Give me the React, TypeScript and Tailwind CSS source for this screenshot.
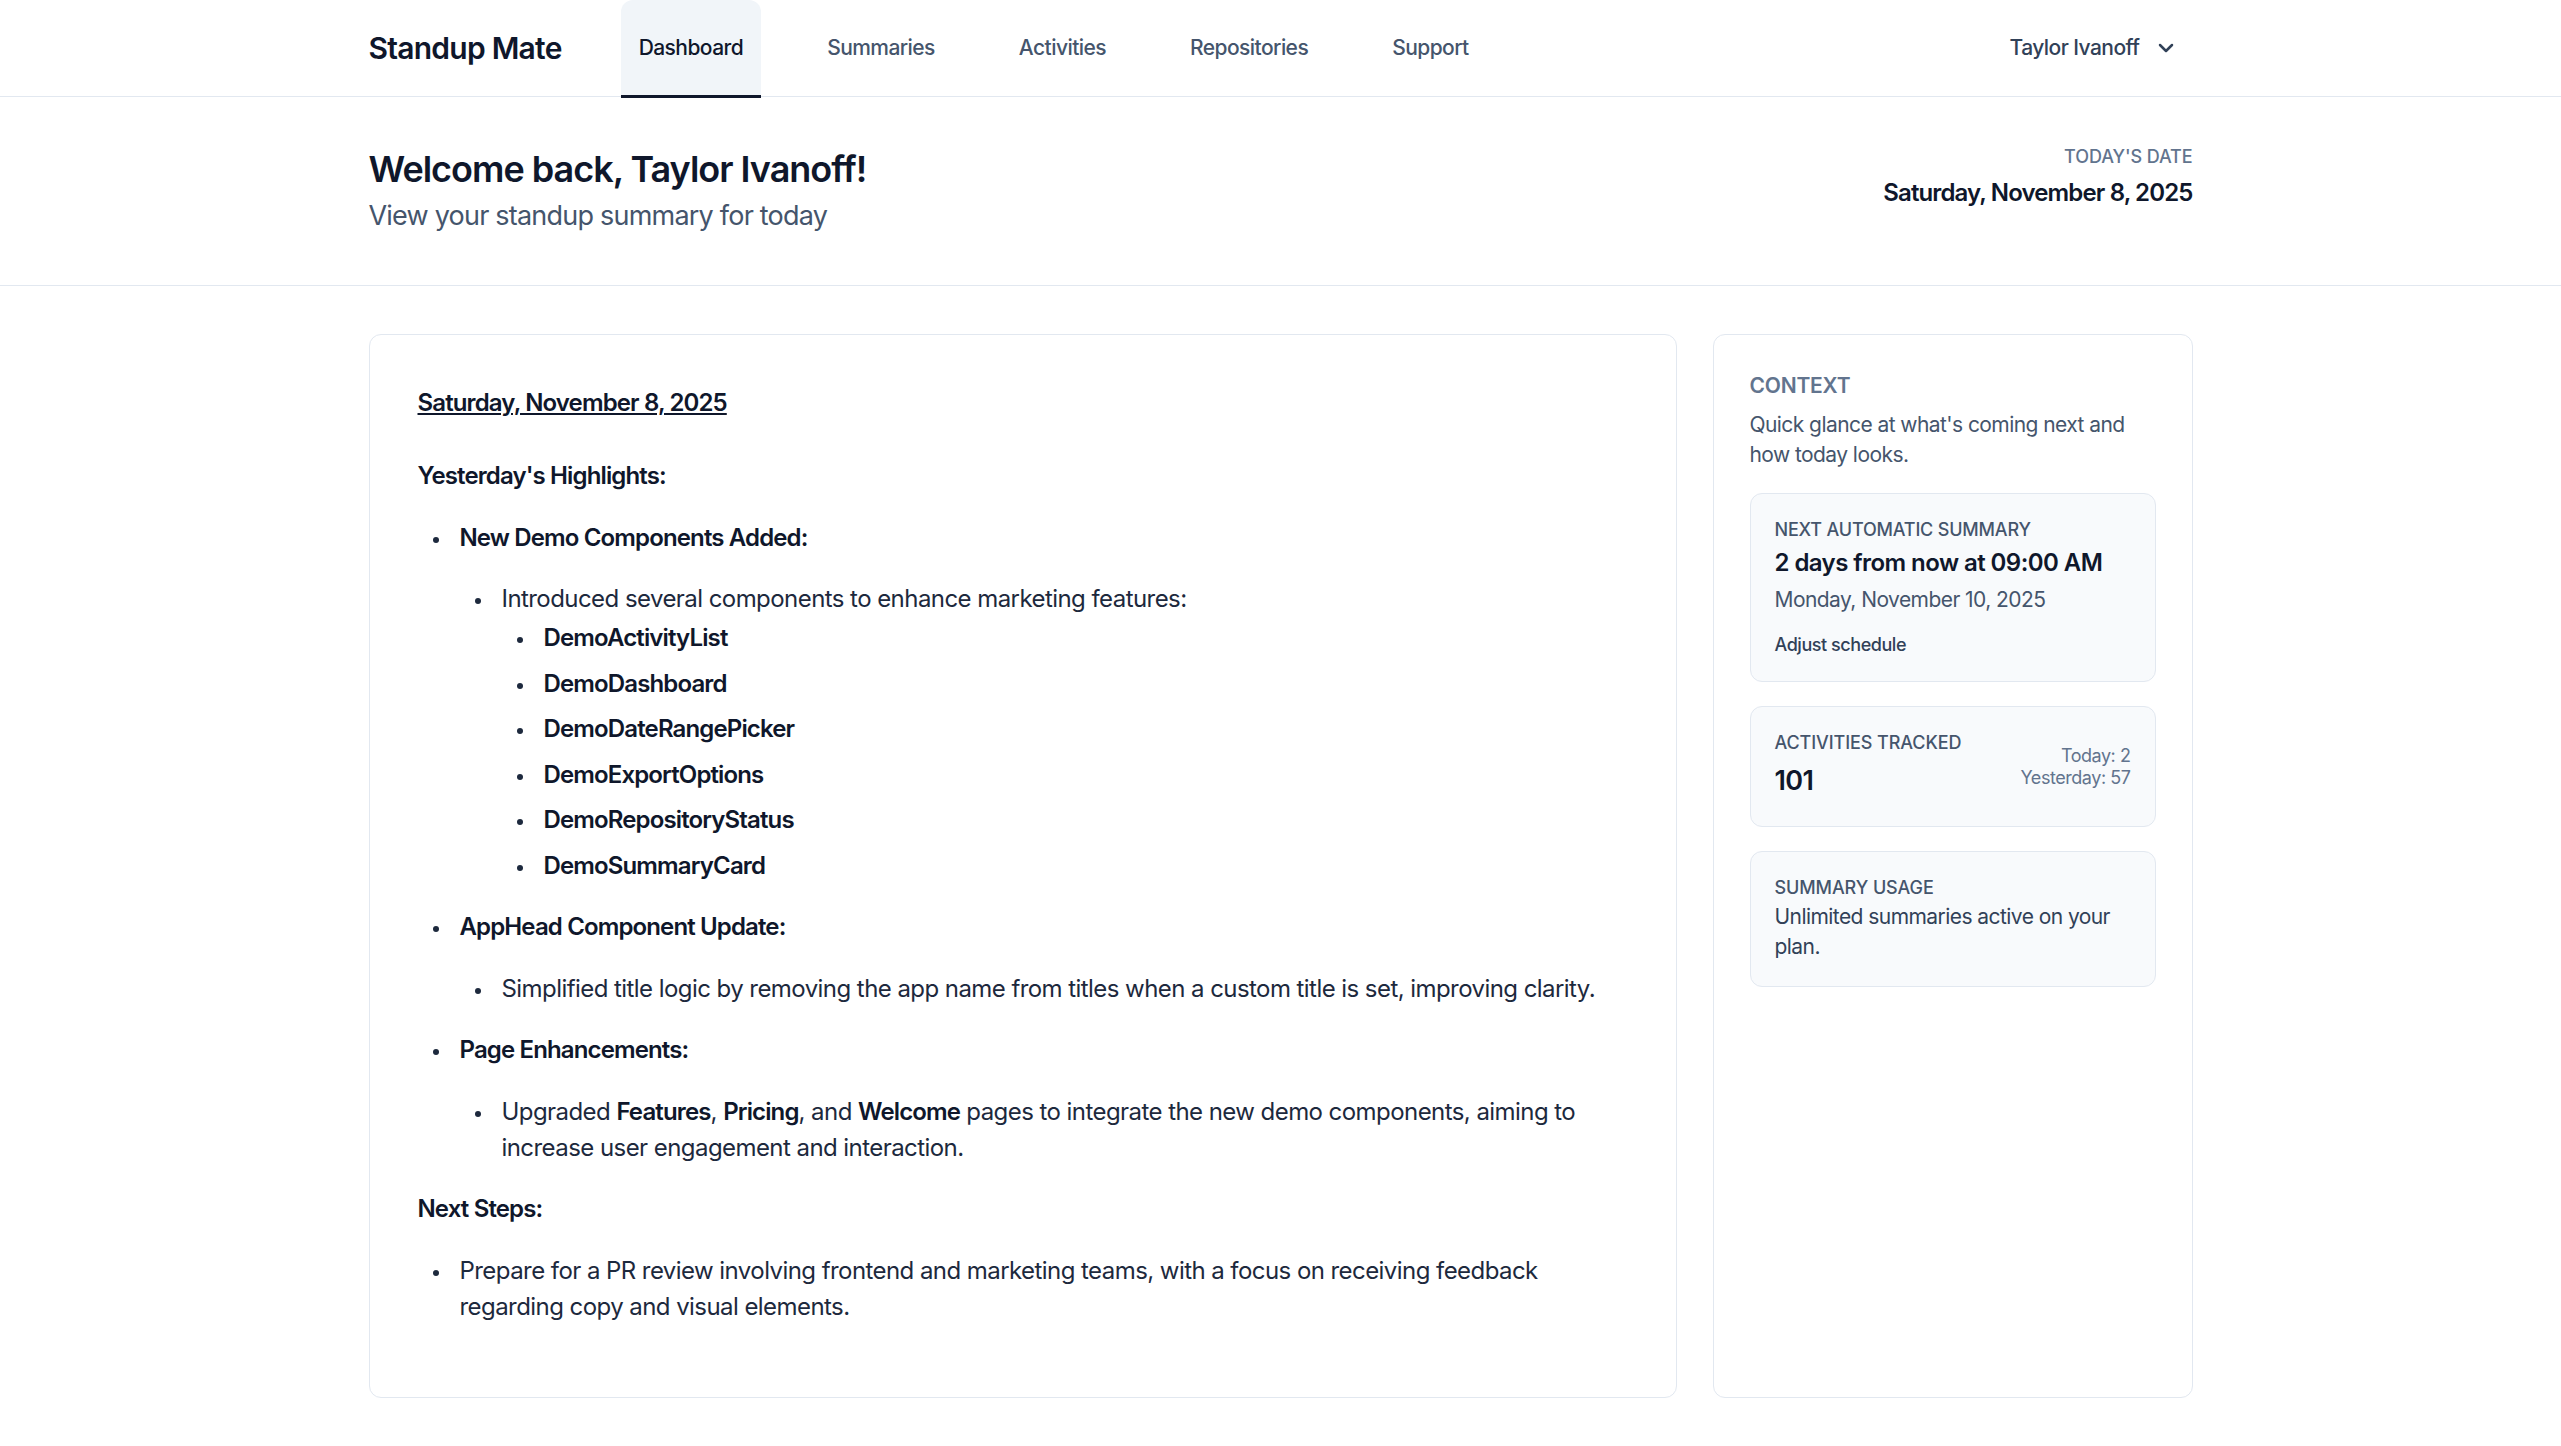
import React from "react";
import { ChevronDown } from "lucide-react";

function Bullet() {
  return (
    <span className="flex h-[36px] w-[42px] shrink-0 items-start">
      <span className="ml-[15px] mt-[17px] h-[6px] w-[6px] rounded-full bg-slate-800" />
    </span>
  );
}

const demoItems = [
  "DemoActivityList",
  "DemoDashboard",
  "DemoDateRangePicker",
  "DemoExportOptions",
  "DemoRepositoryStatus",
  "DemoSummaryCard",
];

const navItems = ["Dashboard", "Summaries", "Activities", "Repositories", "Support"];

const strong = "font-semibold tracking-[-0.036em] text-slate-900";

export default function App() {
  return (
    <div className="min-h-screen bg-white font-[Inter,sans-serif] tracking-[-0.035em] text-slate-900">
      {/* Top navigation */}
      <header className="border-b border-slate-200 bg-white">
        <div className="mx-auto flex h-[96px] max-w-[1920px] items-start justify-between px-[48px]">
          <div className="flex h-full items-start">
            <div className="flex h-[96px] items-center text-[30px] font-semibold tracking-[-0.025em] text-slate-900">
              Standup Mate
            </div>
            <nav className="ml-[59px] flex items-start gap-[48px]">
              {navItems.map((item, i) =>
                i === 0 ? (
                  <a
                    key={item}
                    className="flex h-[98px] items-center rounded-t-[12px] border-b-[3px] border-slate-900 bg-slate-100 px-[18px] text-[21px] font-medium text-slate-900"
                  >
                    {item}
                  </a>
                ) : (
                  <a
                    key={item}
                    className="flex h-[98px] items-center border-b-[3px] border-transparent px-[18px] text-[21px] font-medium text-slate-600"
                  >
                    {item}
                  </a>
                )
              )}
            </nav>
          </div>
          <button className="flex h-[96px] items-center gap-[14px] pl-[18px] pr-[15px] text-[21px] font-medium text-slate-700">
            <span>Taylor Ivanoff</span>
            <ChevronDown size={24} strokeWidth={2.5} className="text-slate-700" />
          </button>
        </div>
      </header>

      {/* Welcome header */}
      <section className="border-b border-slate-200 bg-white">
        <div className="mx-auto flex max-w-[1920px] items-start justify-between px-[48px] py-[48px]">
          <div>
            <h1 className="text-[36px] font-semibold leading-[48px] tracking-[-0.028em] text-slate-900">
              Welcome back, Taylor Ivanoff!
            </h1>
            <p className="mt-[2px] text-[27px] leading-[42px] tracking-[-0.029em] text-slate-600">
              View your standup summary for today
            </p>
          </div>
          <div className="text-right">
            <p className="text-[18px] font-medium uppercase leading-[24px] tracking-[-0.005em] text-slate-500">
              Today's Date
            </p>
            <p className="mt-[6px] text-[24px] font-semibold leading-[36px] tracking-[-0.036em] text-slate-900">
              Saturday, November 8, 2025
            </p>
          </div>
        </div>
      </section>

      {/* Main */}
      <main className="mx-auto max-w-[1920px] px-[48px] py-[48px]">
        <div className="grid grid-cols-[1fr_480px] gap-[36px]">
          {/* Summary card */}
          <article className="rounded-[12px] border border-slate-200 bg-white px-[48px] pb-[48px] pt-[50px] text-[24px] leading-[36px] text-slate-800">
            <p className={`mb-[37px] underline ${strong}`}>Saturday, November 8, 2025</p>
            <p className={strong}>Yesterday's Highlights:</p>
            <ul className="mt-[25.5px] space-y-[25.5px]">
              <li className="flex">
                <Bullet />
                <div className="min-w-0 flex-1">
                  <p className={strong}>New Demo Components Added:</p>
                  <ul className="mt-[25.5px]">
                    <li className="flex">
                      <Bullet />
                      <div className="min-w-0 flex-1">
                        <p>Introduced several components to enhance marketing features:</p>
                        <ul className="mt-[3px] space-y-[9.6px]">
                          {demoItems.map((d) => (
                            <li key={d} className="flex">
                              <Bullet />
                              <span className={strong}>{d}</span>
                            </li>
                          ))}
                        </ul>
                      </div>
                    </li>
                  </ul>
                </div>
              </li>
              <li className="flex">
                <Bullet />
                <div className="min-w-0 flex-1">
                  <p className={strong}>AppHead Component Update:</p>
                  <ul className="mt-[25.5px]">
                    <li className="flex">
                      <Bullet />
                      <p className="min-w-0 flex-1">
                        Simplified title logic by removing the app name from titles when a custom title is set, improving clarity.
                      </p>
                    </li>
                  </ul>
                </div>
              </li>
              <li className="flex">
                <Bullet />
                <div className="min-w-0 flex-1">
                  <p className={strong}>Page Enhancements:</p>
                  <ul className="mt-[25.5px]">
                    <li className="flex">
                      <Bullet />
                      <p className="min-w-0 flex-1">
                        Upgraded <strong className={strong}>Features</strong>,{" "}
                        <strong className={strong}>Pricing</strong>, and{" "}
                        <strong className={strong}>Welcome</strong> pages to integrate the new demo components, aiming
                        to increase user engagement and interaction.
                      </p>
                    </li>
                  </ul>
                </div>
              </li>
            </ul>
            <p className={`mt-[25.5px] ${strong}`}>Next Steps:</p>
            <ul className="mb-[24px] mt-[25.5px]">
              <li className="flex">
                <Bullet />
                <p className="min-w-0 flex-1">
                  Prepare for a PR review involving frontend and marketing teams, with a focus on receiving feedback
                  regarding copy and visual elements.
                </p>
              </li>
            </ul>
          </article>

          {/* Context card */}
          <aside className="rounded-[12px] border border-slate-200 bg-white p-[36px]">
            <h2 className="text-[21px] font-semibold uppercase leading-[30px] tracking-[-0.01em] text-slate-500">
              Context
            </h2>
            <p className="mt-[9px] text-[21px] leading-[30px] tracking-[-0.027em] text-slate-600">
              Quick glance at what's coming next and how today looks.
            </p>
            <div className="mt-[23px] space-y-[24px]">
              <div className="rounded-[12px] border border-slate-200 bg-slate-50 p-[24px]">
                <p className="text-[18px] font-medium uppercase leading-[24px] tracking-[-0.01em] text-slate-600">
                  Next automatic summary
                </p>
                <p className="mt-[3px] text-[24px] font-semibold leading-[36px] text-slate-900">
                  2 days from now at 09:00 AM
                </p>
                <p className="mt-[4px] text-[21px] leading-[30px] text-slate-600">Monday, November 10, 2025</p>
                <button className="mt-[18px] block text-[18px] font-medium leading-[24px] tracking-[-0.025em] text-slate-700">
                  Adjust schedule
                </button>
              </div>

              <div className="flex items-center justify-between rounded-[12px] border border-slate-200 bg-slate-50 p-[24px]">
                <div>
                  <p className="text-[18px] font-medium uppercase leading-[24px] tracking-[-0.005em] text-slate-600">
                    Activities tracked
                  </p>
                  <p className="mt-[5px] text-[27px] font-semibold leading-[42px] text-slate-900">101</p>
                </div>
                <div className="text-right text-[18px] leading-[22px] tracking-[-0.025em] text-slate-500">
                  <p>Today: 2</p>
                  <p>Yesterday: 57</p>
                </div>
              </div>

              <div className="rounded-[12px] border border-slate-200 bg-slate-50 p-[24px]">
                <p className="text-[18px] font-medium uppercase leading-[24px] tracking-[-0.005em] text-slate-600">
                  Summary usage
                </p>
                <p className="mt-[2px] text-[21px] leading-[30px] text-slate-700">
                  Unlimited summaries active on your plan.
                </p>
              </div>
            </div>
          </aside>
        </div>
      </main>
    </div>
  );
}
